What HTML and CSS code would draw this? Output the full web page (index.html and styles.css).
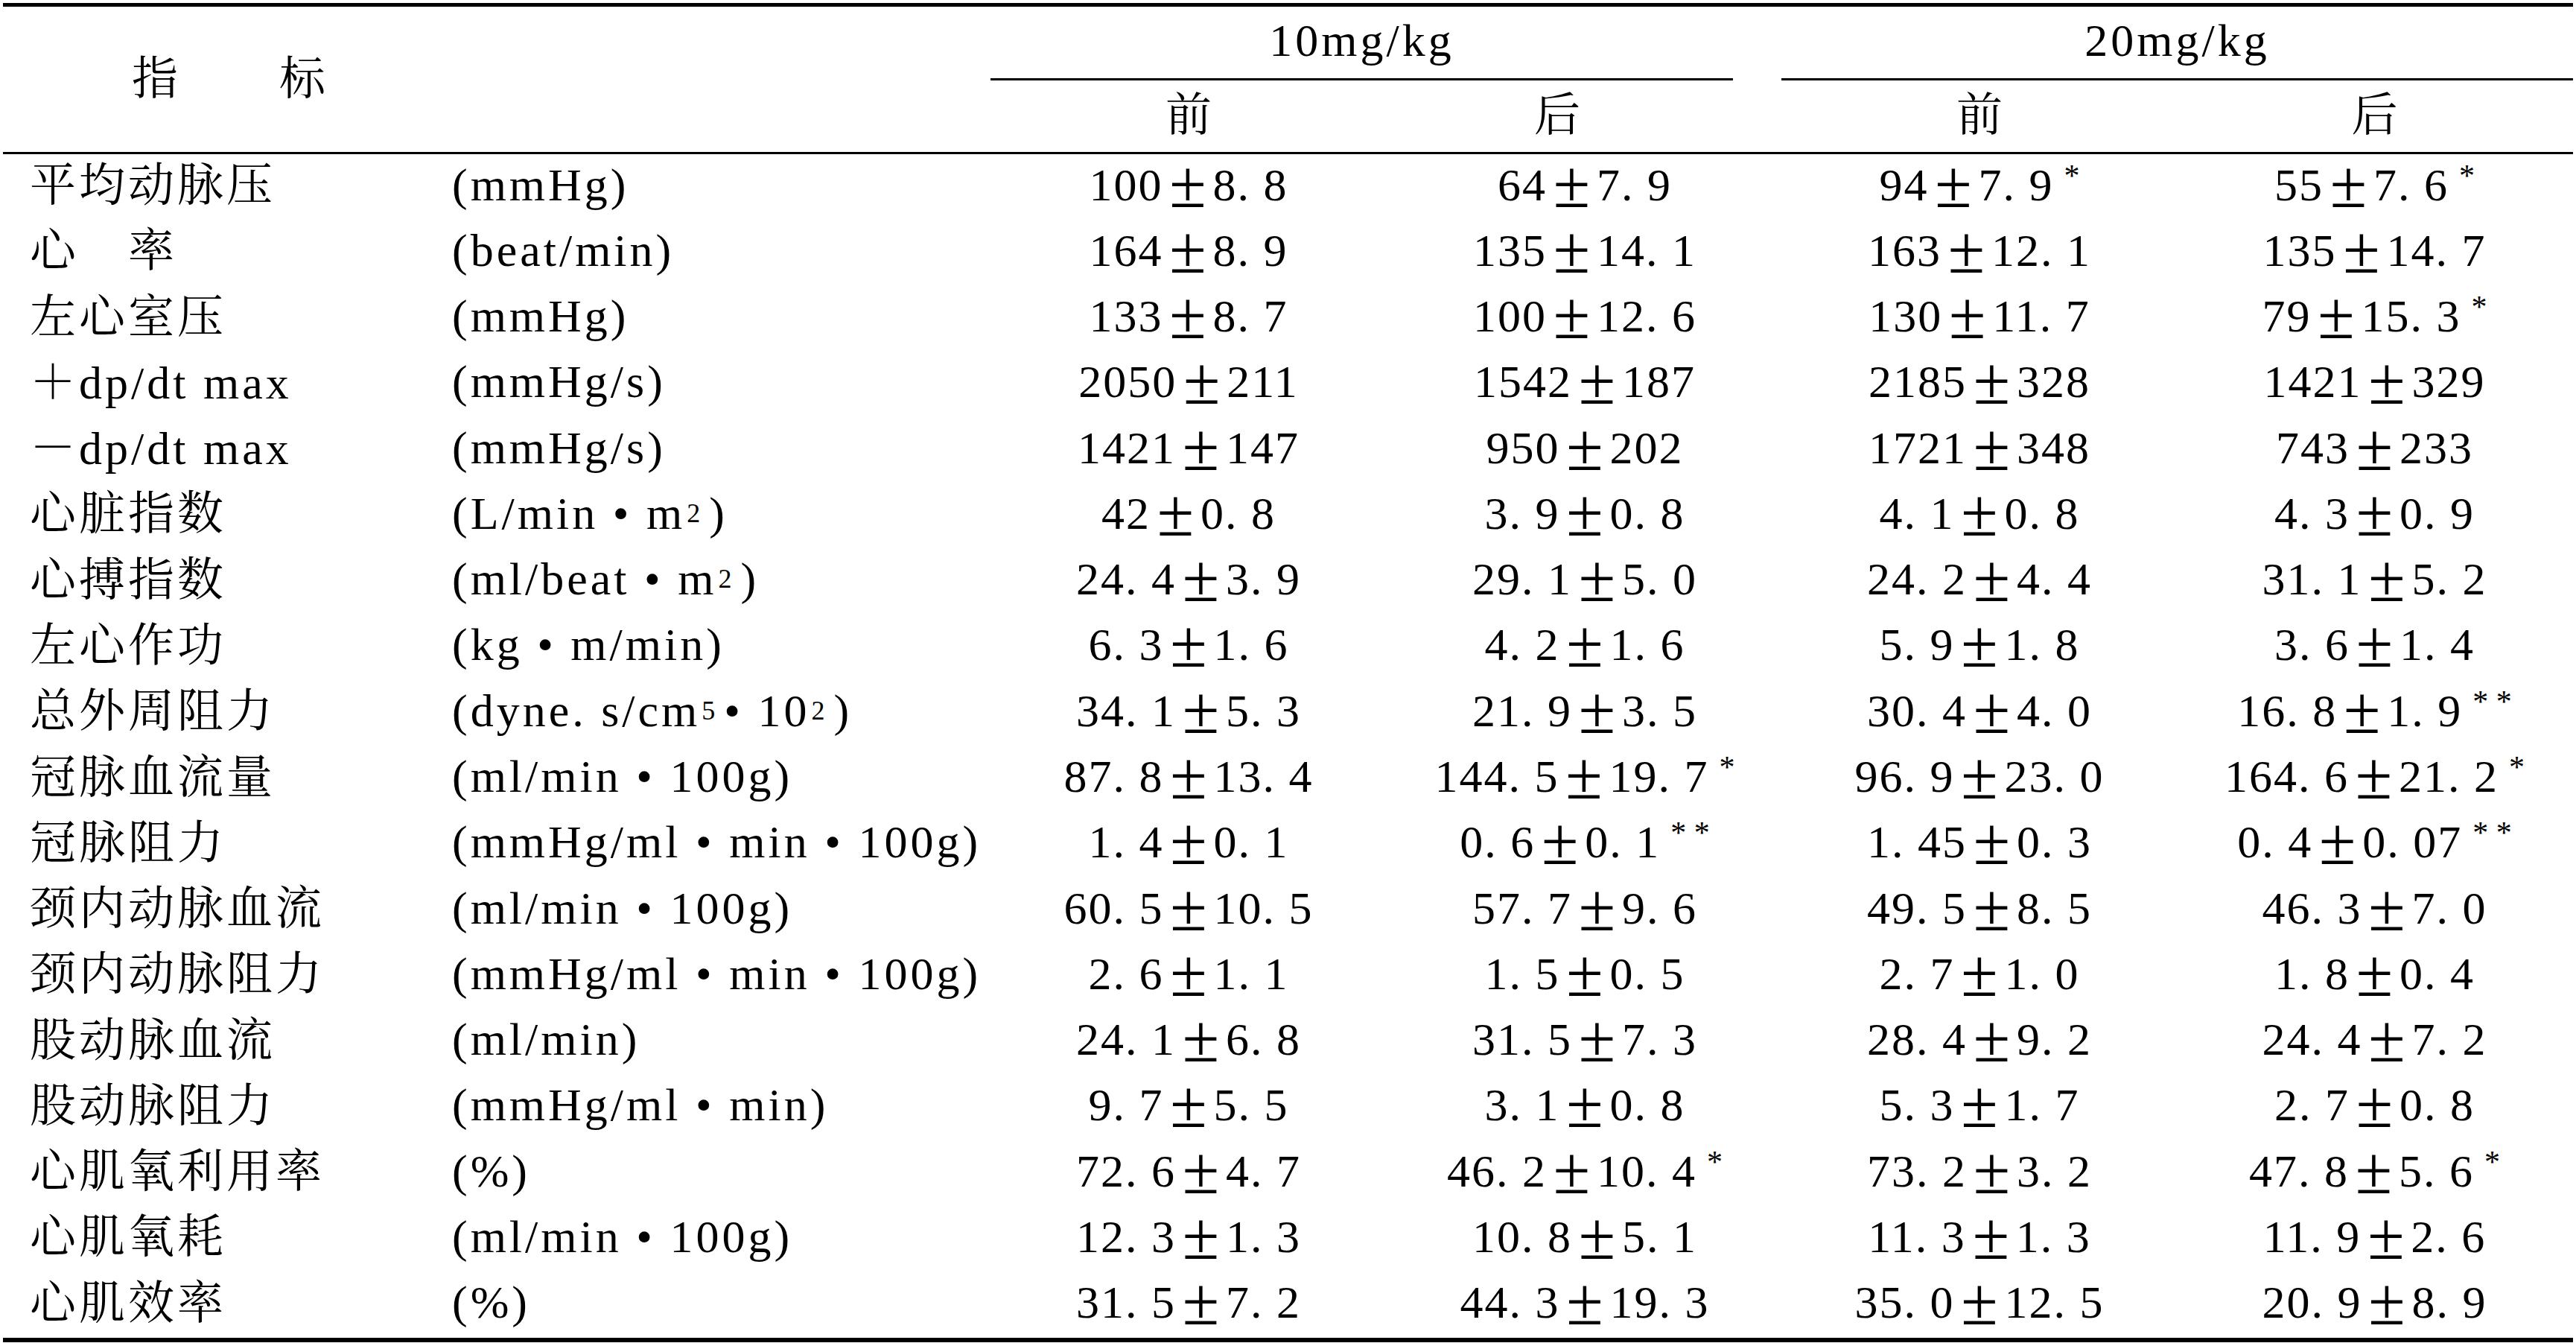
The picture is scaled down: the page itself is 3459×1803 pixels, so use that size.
FILE: index.html
```html
<!DOCTYPE html>
<html lang="zh-CN">
<head>
<meta charset="utf-8">
<title>指标</title>
<link rel="stylesheet" href="styles.css">
</head>
<body>
<div class="tbl">
  <div class="head">
    <div class="h-idx"><span>指　　标</span></div>
    <div class="h-grp"><div class="h-grp-in first">10mg/kg</div></div>
    <div class="h-grp"><div class="h-grp-in second">20mg/kg</div></div>
    <div class="h-sub">前</div>
    <div class="h-sub shift">后</div>
    <div class="h-sub">前</div>
    <div class="h-sub">后</div>
  </div>
  <div class="body">
    <div class="c-name">平均动脉压</div><div class="c-unit">(mmHg)</div>
    <div class="c-val">100<span class="pm">±</span>8. 8</div><div class="c-val">64<span class="pm">±</span>7. 9</div><div class="c-val">94<span class="pm">±</span>7. 9<span class="s">*</span></div><div class="c-val">55<span class="pm">±</span>7. 6<span class="s">*</span></div>

    <div class="c-name">心　率</div><div class="c-unit">(beat/min)</div>
    <div class="c-val">164<span class="pm">±</span>8. 9</div><div class="c-val">135<span class="pm">±</span>14. 1</div><div class="c-val">163<span class="pm">±</span>12. 1</div><div class="c-val">135<span class="pm">±</span>14. 7</div>

    <div class="c-name">左心室压</div><div class="c-unit">(mmHg)</div>
    <div class="c-val">133<span class="pm">±</span>8. 7</div><div class="c-val">100<span class="pm">±</span>12. 6</div><div class="c-val">130<span class="pm">±</span>11. 7</div><div class="c-val">79<span class="pm">±</span>15. 3<span class="s">*</span></div>

    <div class="c-name">＋dp/dt max</div><div class="c-unit">(mmHg/s)</div>
    <div class="c-val">2050<span class="pm">±</span>211</div><div class="c-val">1542<span class="pm">±</span>187</div><div class="c-val">2185<span class="pm">±</span>328</div><div class="c-val">1421<span class="pm">±</span>329</div>

    <div class="c-name">－dp/dt max</div><div class="c-unit">(mmHg/s)</div>
    <div class="c-val">1421<span class="pm">±</span>147</div><div class="c-val">950<span class="pm">±</span>202</div><div class="c-val">1721<span class="pm">±</span>348</div><div class="c-val">743<span class="pm">±</span>233</div>

    <div class="c-name">心脏指数</div><div class="c-unit">(L/min • m<sup class="up">2</sup>)</div>
    <div class="c-val">42<span class="pm">±</span>0. 8</div><div class="c-val">3. 9<span class="pm">±</span>0. 8</div><div class="c-val">4. 1<span class="pm">±</span>0. 8</div><div class="c-val">4. 3<span class="pm">±</span>0. 9</div>

    <div class="c-name">心搏指数</div><div class="c-unit">(ml/beat • m<sup class="up">2</sup>)</div>
    <div class="c-val">24. 4<span class="pm">±</span>3. 9</div><div class="c-val">29. 1<span class="pm">±</span>5. 0</div><div class="c-val">24. 2<span class="pm">±</span>4. 4</div><div class="c-val">31. 1<span class="pm">±</span>5. 2</div>

    <div class="c-name">左心作功</div><div class="c-unit">(kg • m/min)</div>
    <div class="c-val">6. 3<span class="pm">±</span>1. 6</div><div class="c-val">4. 2<span class="pm">±</span>1. 6</div><div class="c-val">5. 9<span class="pm">±</span>1. 8</div><div class="c-val">3. 6<span class="pm">±</span>1. 4</div>

    <div class="c-name">总外周阻力</div><div class="c-unit">(dyne. s/cm<sup class="up">5</sup> • 10<sup class="up">2</sup>)</div>
    <div class="c-val">34. 1<span class="pm">±</span>5. 3</div><div class="c-val">21. 9<span class="pm">±</span>3. 5</div><div class="c-val">30. 4<span class="pm">±</span>4. 0</div><div class="c-val">16. 8<span class="pm">±</span>1. 9<span class="s">* *</span></div>

    <div class="c-name">冠脉血流量</div><div class="c-unit">(ml/min • 100g)</div>
    <div class="c-val">87. 8<span class="pm">±</span>13. 4</div><div class="c-val">144. 5<span class="pm">±</span>19. 7<span class="s">*</span></div><div class="c-val">96. 9<span class="pm">±</span>23. 0</div><div class="c-val">164. 6<span class="pm">±</span>21. 2<span class="s">*</span></div>

    <div class="c-name">冠脉阻力</div><div class="c-unit">(mmHg/ml • min • 100g)</div>
    <div class="c-val">1. 4<span class="pm">±</span>0. 1</div><div class="c-val">0. 6<span class="pm">±</span>0. 1<span class="s">* *</span></div><div class="c-val">1. 45<span class="pm">±</span>0. 3</div><div class="c-val">0. 4<span class="pm">±</span>0. 07<span class="s">* *</span></div>

    <div class="c-name">颈内动脉血流</div><div class="c-unit">(ml/min • 100g)</div>
    <div class="c-val">60. 5<span class="pm">±</span>10. 5</div><div class="c-val">57. 7<span class="pm">±</span>9. 6</div><div class="c-val">49. 5<span class="pm">±</span>8. 5</div><div class="c-val">46. 3<span class="pm">±</span>7. 0</div>

    <div class="c-name">颈内动脉阻力</div><div class="c-unit">(mmHg/ml • min • 100g)</div>
    <div class="c-val">2. 6<span class="pm">±</span>1. 1</div><div class="c-val">1. 5<span class="pm">±</span>0. 5</div><div class="c-val">2. 7<span class="pm">±</span>1. 0</div><div class="c-val">1. 8<span class="pm">±</span>0. 4</div>

    <div class="c-name">股动脉血流</div><div class="c-unit">(ml/min)</div>
    <div class="c-val">24. 1<span class="pm">±</span>6. 8</div><div class="c-val">31. 5<span class="pm">±</span>7. 3</div><div class="c-val">28. 4<span class="pm">±</span>9. 2</div><div class="c-val">24. 4<span class="pm">±</span>7. 2</div>

    <div class="c-name">股动脉阻力</div><div class="c-unit">(mmHg/ml • min)</div>
    <div class="c-val">9. 7<span class="pm">±</span>5. 5</div><div class="c-val">3. 1<span class="pm">±</span>0. 8</div><div class="c-val">5. 3<span class="pm">±</span>1. 7</div><div class="c-val">2. 7<span class="pm">±</span>0. 8</div>

    <div class="c-name">心肌氧利用率</div><div class="c-unit">(%)</div>
    <div class="c-val">72. 6<span class="pm">±</span>4. 7</div><div class="c-val">46. 2<span class="pm">±</span>10. 4<span class="s">*</span></div><div class="c-val">73. 2<span class="pm">±</span>3. 2</div><div class="c-val">47. 8<span class="pm">±</span>5. 6<span class="s">*</span></div>

    <div class="c-name">心肌氧耗</div><div class="c-unit">(ml/min • 100g)</div>
    <div class="c-val">12. 3<span class="pm">±</span>1. 3</div><div class="c-val">10. 8<span class="pm">±</span>5. 1</div><div class="c-val">11. 3<span class="pm">±</span>1. 3</div><div class="c-val">11. 9<span class="pm">±</span>2. 6</div>

    <div class="c-name">心肌效率</div><div class="c-unit">(%)</div>
    <div class="c-val">31. 5<span class="pm">±</span>7. 2</div><div class="c-val">44. 3<span class="pm">±</span>19. 3</div><div class="c-val">35. 0<span class="pm">±</span>12. 5</div><div class="c-val">20. 9<span class="pm">±</span>8. 9</div>
  </div>
</div>
</body>
</html>
```

FILE: styles.css
```css
html, body {
  margin: 0;
  background: #ffffff;
}

body {
  padding: 4px 0 0 4px;
  color: #000000;
  font-family: "Liberation Serif", "Noto Serif CJK SC", "Noto Sans CJK SC", serif;
  font-size: 62px;
  line-height: 70px;
}

.tbl {
  width: 3451px;
  border-top: 5px solid #000;
  border-bottom: 6px solid #000;
}

.head,
.body {
  display: grid;
  grid-template-columns: 596px 730px 532px 532px 528px 533px;
}

.head {
  grid-template-rows: 99px 99px;
}

.h-idx {
  grid-column: 1 / 3;
  grid-row: 1 / 3;
  display: flex;
  align-items: center;
  border-bottom: 3px solid #000;
  padding-bottom: 2px;
}

.h-idx span {
  width: 610px;
  text-align: center;
  letter-spacing: 4px;
}

.h-grp {
  grid-column: span 2;
  grid-row: 1;
  display: flex;
}

.h-grp-in {
  flex: 1;
  display: flex;
  align-items: center;
  justify-content: center;
  border-bottom: 3px solid #000;
  padding-bottom: 6px;
  letter-spacing: 4px;
}

.h-grp-in.first {
  margin-right: 67px;
}

.h-grp-in.second {
  margin-left: -2px;
}

.h-sub {
  grid-row: 2;
  display: flex;
  align-items: center;
  justify-content: center;
  border-bottom: 3px solid #000;
  padding-bottom: 2px;
}

.h-sub.shift {
  padding-right: 74px;
}

.body {
  grid-auto-rows: 88.28px;
}

.c-name,
.c-unit,
.c-val {
  display: flex;
  align-items: center;
  padding-bottom: 7px;
  white-space: nowrap;
  box-sizing: border-box;
}

.c-name {
  padding-left: 36px;
  padding-bottom: 4px;
  letter-spacing: 4px;
}

.c-unit {
  padding-left: 7px;
  letter-spacing: 4px;
}

.c-val {
  justify-content: center;
  letter-spacing: 2px;
}

.pm {
  display: inline-block;
  width: 67px;
  text-align: center;
  font-size: 90px;
  line-height: 56px;
  letter-spacing: 0;
}

.s {
  font-size: 42px;
  margin-left: 14px;
  position: relative;
  top: -12px;
  letter-spacing: 0;
  line-height: 1;
}

.up {
  font-size: 36px;
  line-height: 1;
  vertical-align: 26px;
  letter-spacing: 0;
  margin-left: 2px;
  margin-right: 12px;
}
```
